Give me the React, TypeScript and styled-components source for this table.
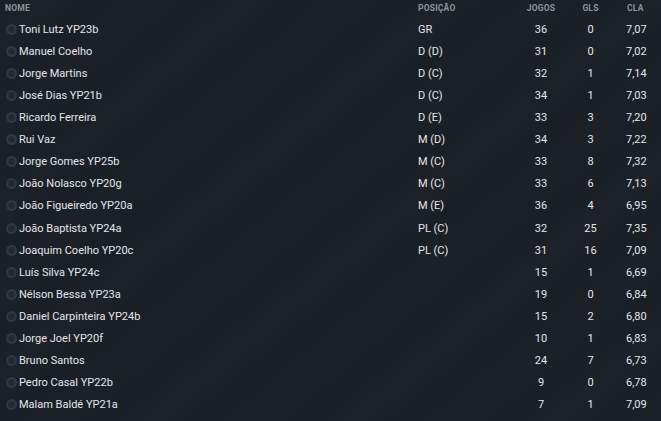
import React from "react";
import styled, { createGlobalStyle } from "styled-components";

const Global = createGlobalStyle`
  html, body { margin: 0; padding: 0; }
  body {
    width: 661px;
    height: 421px;
    overflow: hidden;
    background: #1a1e26;
    font-family: Roboto, "Liberation Sans", Arial, sans-serif;
  }
`;

const Panel = styled.div`
  width: 661px;
  height: 421px;
  overflow: hidden;
  background-color: #1a1e25;
  background-image:
    repeating-linear-gradient(140deg, rgba(255,255,255,0) 0px, rgba(255,255,255,0.016) 30px, rgba(255,255,255,0) 60px, rgba(255,255,255,0.01) 95px, rgba(255,255,255,0) 130px);
  display: flex;
  flex-direction: column;
`;

const cols = "418px 96px 54px 45px 1fr";

const HeaderRow = styled.div`
  display: grid;
  grid-template-columns: ${cols};
  height: 18px;
  align-items: center;
  font-size: 8.5px;
  font-weight: 700;
  color: #8e939b;
  letter-spacing: 0.2px;
  text-transform: uppercase;
`;

const HCell = styled.div<{ $align?: string; $pl?: number }>`
  text-align: ${(p) => p.$align || "left"};
  padding-left: ${(p) => p.$pl ?? 0}px;
  margin-top: -2px;
`;

const Row = styled.div`
  display: grid;
  grid-template-columns: ${cols};
  height: 22.12px;
  align-items: center;
  font-size: 11px;
  color: #e4e6ea;
`;

const NameCell = styled.div`
  display: flex;
  align-items: center;
  gap: 2px;
  padding-left: 6px;
`;

const Dot = styled.span`
  width: 11px;
  height: 11px;
  border-radius: 50%;
  box-sizing: border-box;
  background: radial-gradient(circle, #25282e 0 2.8px, #33363c 3.8px 5.5px);
  flex: none;
`;

const Cell = styled.div<{ $align?: string; $pl?: number }>`
  text-align: ${(p) => p.$align || "left"};
  padding-left: ${(p) => p.$pl ?? 0}px;
`;

type P = [string, string, number, number, string];
const players: P[] = [
  ["Toni Lutz YP23b", "GR", 36, 0, "7,07"],
  ["Manuel Coelho", "D (D)", 31, 0, "7,02"],
  ["Jorge Martins", "D (C)", 32, 1, "7,14"],
  ["José Dias YP21b", "D (C)", 34, 1, "7,03"],
  ["Ricardo Ferreira", "D (E)", 33, 3, "7,20"],
  ["Rui Vaz", "M (D)", 34, 3, "7,22"],
  ["Jorge Gomes YP25b", "M (C)", 33, 8, "7,32"],
  ["João Nolasco YP20g", "M (C)", 33, 6, "7,13"],
  ["João Figueiredo YP20a", "M (E)", 36, 4, "6,95"],
  ["João Baptista YP24a", "PL (C)", 32, 25, "7,35"],
  ["Joaquim Coelho YP20c", "PL (C)", 31, 16, "7,09"],
  ["Luís Silva YP24c", "", 15, 1, "6,69"],
  ["Nélson Bessa YP23a", "", 19, 0, "6,84"],
  ["Daniel Carpinteira YP24b", "", 15, 2, "6,80"],
  ["Jorge Joel YP20f", "", 10, 1, "6,83"],
  ["Bruno Santos", "", 24, 7, "6,73"],
  ["Pedro Casal YP22b", "", 9, 0, "6,78"],
  ["Malam Baldé YP21a", "", 7, 1, "7,09"],
];

export default function App() {
  return (
    <Panel>
      <Global />
      <HeaderRow>
        <HCell $pl={5}>Nome</HCell>
        <HCell>Posição</HCell>
        <HCell $align="center">Jogos</HCell>
        <HCell $align="center">Gls</HCell>
        <HCell $pl={14}>Cla</HCell>
      </HeaderRow>
      {players.map(([n, pos, j, g, c]) => (
        <Row key={n}>
          <NameCell>
            <Dot />
            <span>{n}</span>
          </NameCell>
          <Cell>{pos}</Cell>
          <Cell $align="center">{j}</Cell>
          <Cell $align="center">{g}</Cell>
          <Cell $pl={13}>{c}</Cell>
        </Row>
      ))}
    </Panel>
  );
}
